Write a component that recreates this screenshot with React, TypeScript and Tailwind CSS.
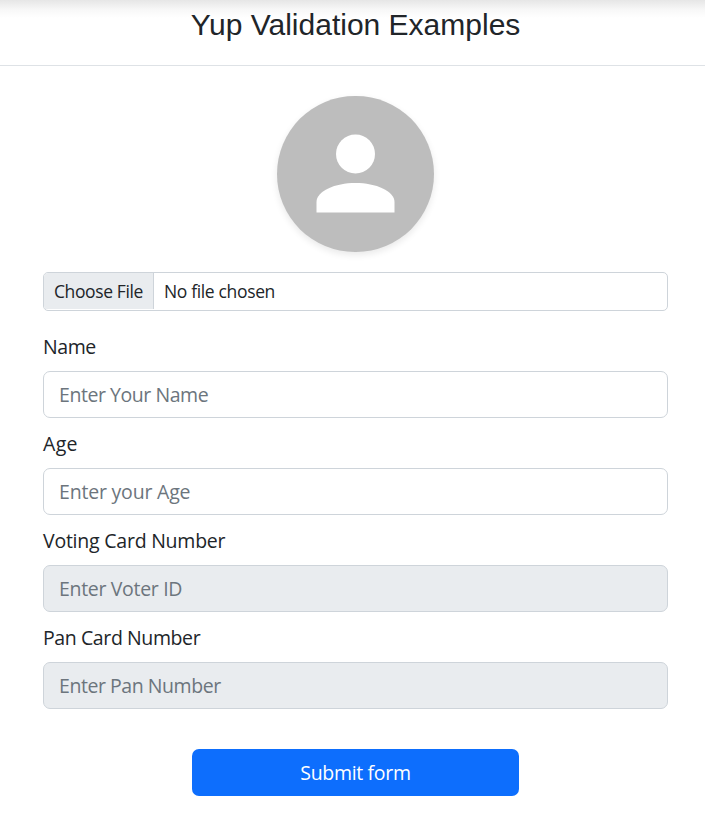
const fields = [
  { id: "name", label: "Name", placeholder: "Enter Your Name", disabled: false, labelTracking: "tracking-[-0.4px]", inputTracking: "tracking-[-0.45px]" },
  { id: "age", label: "Age", placeholder: "Enter your Age", disabled: false, labelTracking: "tracking-[0.3px]", inputTracking: "tracking-[-0.2px]" },
  { id: "voter", label: "Voting Card Number", placeholder: "Enter Voter ID", disabled: true, labelTracking: "tracking-[-0.23px]", inputTracking: "tracking-[-0.32px]" },
  { id: "pan", label: "Pan Card Number", placeholder: "Enter Pan Number", disabled: true, labelTracking: "tracking-[-0.4px]", inputTracking: "tracking-[-0.45px]" },
];

function Avatar() {
  return (
    <div className="mx-auto mt-[30px] h-[156px] w-[157px] overflow-hidden rounded-full bg-[#bdbdbd] shadow-[0_3px_7px_rgba(0,0,0,0.09)]">
      <svg viewBox="0 0 157 156" className="block h-full w-full" fill="white">
        <circle cx="78.5" cy="58" r="19.5" />
        <path d="M39.5 116.5V106C39.5 95 58 87 78.5 87S117.5 95 117.5 106V116.5Z" />
      </svg>
    </div>
  );
}

export default function App() {
  return (
    <main className="h-[818px] w-full overflow-hidden bg-white font-['Open_Sans',sans-serif] text-[#212529]">
      <header className="flex h-[66px] justify-center border-b border-[#dee2e6] bg-linear-to-b from-[#e6e6e6] from-0% via-[#f8f8f8] via-[10px] to-white to-[18px] pl-[6px]">
        <h1 className="pt-[7px] font-['Liberation_Sans',sans-serif] text-[30px] leading-[36px]">Yup Validation Examples</h1>
      </header>
      <form className="ml-[43px] w-[625px]">
        <Avatar />
        <div className="mt-5 flex h-[39px] overflow-hidden rounded-[5px] border border-[#ced4da] text-[17.5px] leading-[37px]">
          <button type="button" className="mb-px flex w-[110px] shrink-0 justify-center border-r border-[#ced4da] bg-[#e9ecef] tracking-[-0.38px]">Choose File</button>
          <span className="pl-[10px] tracking-[-0.35px]">No file chosen</span>
        </div>
        <div className="mt-[21px]">
          {fields.map((f) => (
            <div key={f.id} className="h-[97px]">
              <label htmlFor={f.id} className={`block h-[39px] text-[19.5px] leading-[30px] ${f.labelTracking}`}>{f.label}</label>
              <input
                id={f.id}
                placeholder={f.placeholder}
                disabled={f.disabled}
                className={`block h-[47px] w-full rounded-[7px] border border-[#ced4da] bg-white px-[15px] text-[19.5px] placeholder:text-[#6c757d] disabled:bg-[#e9ecef] ${f.inputTracking}`}
              />
            </div>
          ))}
        </div>
        <button type="button" className="mx-auto mt-[29px] block h-[47px] w-[327px] rounded-[7px] bg-[#0d6efd] pt-px text-[19.5px] tracking-[-0.33px] text-white">Submit form</button>
      </form>
    </main>
  );
}
